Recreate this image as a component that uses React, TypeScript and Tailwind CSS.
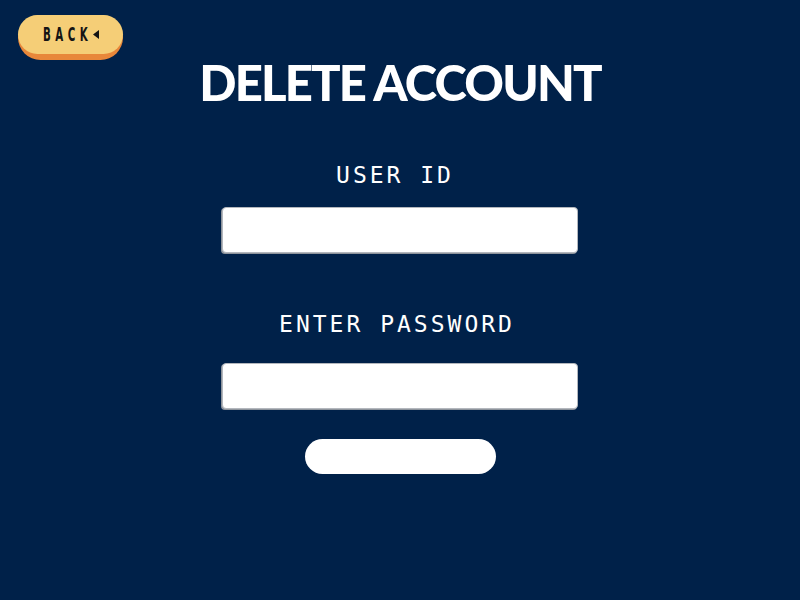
import React from "react";

export default function App() {
  return (
    <div className="w-[800px] h-[600px] bg-[#002149] overflow-hidden flex flex-col">
      <div className="pl-[18px] pt-[15px]">
        <button className="h-[45px] w-[105px] rounded-full bg-[#e8873a] flex items-start p-0">
          <span className="h-[39px] w-[105px] rounded-full bg-[#f5ce77] flex items-center pl-[25px]">
            <span className="inline-block w-[50px] whitespace-nowrap overflow-visible">
              <span
                className="inline-block origin-left scale-x-[0.6] text-[19px] font-bold tracking-[7.5px] text-[#141414] leading-none"
                style={{ fontFamily: '"DejaVu Sans Condensed", "DejaVu Sans", sans-serif' }}
              >
                BACK
              </span>
            </span>
            <svg width="6" height="9" viewBox="0 0 6 9">
              <polygon points="6,0 6,9 0,4.5" fill="#141414" />
            </svg>
          </span>
        </button>
      </div>
      <h1
        className="mt-[-2px] text-center text-white text-[49px] font-black leading-none tracking-[-1.8px]"
        style={{ fontFamily: 'Lato, "Noto Sans", sans-serif' }}
      >
        DELETE ACCOUNT
      </h1>
      <div className="flex flex-col items-center">
        <label
          className="mt-[57px] mr-[10px] text-white text-[23px] leading-none tracking-[3px]"
          style={{ fontFamily: '"DejaVu Sans Mono", monospace' }}
        >
          USER ID
        </label>
        <input
          type="text"
          className="mt-[20px] w-[356px] h-[46px] bg-white rounded-[4px] border border-[#b3b7bd] shadow-[-1px_1px_0_#8e949c] outline-none"
        />
        <label
          className="mt-[60px] mr-[6px] text-white text-[23px] leading-none tracking-[3px]"
          style={{ fontFamily: '"DejaVu Sans Mono", monospace' }}
        >
          ENTER PASSWORD
        </label>
        <input
          type="password"
          className="mt-[27px] w-[356px] h-[46px] bg-white rounded-[4px] border border-[#b3b7bd] shadow-[-1px_1px_0_#8e949c] outline-none"
        />
        <button className="mt-[30px] w-[191px] h-[35px] rounded-full bg-white" />
      </div>
    </div>
  );
}
